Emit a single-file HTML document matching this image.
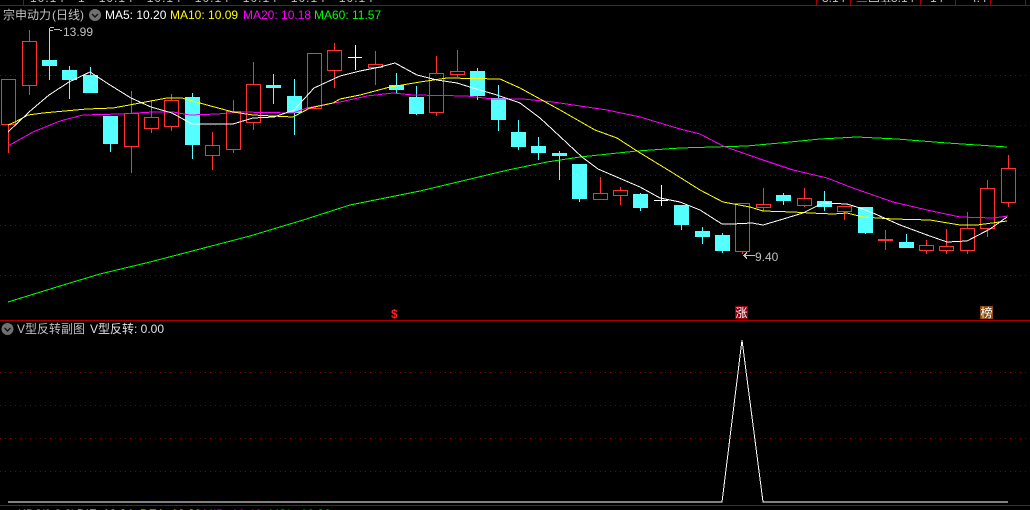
<!DOCTYPE html>
<html>
<head>
<meta charset="utf-8">
<style>
html,body{margin:0;padding:0;background:#000;width:1030px;height:510px;overflow:hidden}
svg{display:block;position:absolute;left:0;top:0}
text{font-family:"Liberation Sans","Noto Sans CJK SC",sans-serif;font-size:12px}
</style>
</head>
<body>
<svg width="1030" height="510" viewBox="0 0 1030 510" xmlns="http://www.w3.org/2000/svg">
<g shape-rendering="crispEdges" fill="none">
<!-- grid -->
<g stroke="#800000" stroke-width="1" stroke-dasharray="1 4">
<path d="M0 75.5H1030M0 125.5H1030M0 175.5H1030M0 225.5H1030M0 275.5H1030"/>
<path d="M0 372.5H1030M0 405.5H1030M0 438.5H1030M0 471.5H1030"/>
</g>
<!-- frame -->
<path stroke="#a80000" d="M0 5.5H1030M0 320.5H1030M0 505.5H1030M23.5 0V5M816.5 0V5M850.5 0V5M885.5 0V5M920.5 0V5M955.5 0V5M990.5 0V5M1025.5 0V5"/>
<!-- red candles -->
<path stroke="#ff3232" d="
M1.5 79.5h14v45h-14zM8.5 125V153
M22.5 41.5h14v44h-14zM29.5 30V41M29.5 86V95
M124.5 113.5h14v33h-14zM131.5 91V113M131.5 147V173
M144.5 117.5h14v11h-14zM151.5 100V117M151.5 129V133
M164.5 100.5h14v26h-14zM171.5 94V100M171.5 127V131
M205.5 145.5h14v10h-14zM212.5 132V145M212.5 156V170
M226.5 111.5h14v38h-14zM233.5 100V111M233.5 150V153
M246.5 84.5h14v38h-14zM253.5 62V84M253.5 123V130
M307.5 53.5h14v55h-14z
M327.5 50.5h14v20h-14zM334.5 43V50M334.5 71V88
M368.5 64.5h14v3h-14zM375.5 51V64M375.5 68V85
M429.5 73.5h14v39h-14zM436.5 56V73M436.5 113V116
M450.5 71.5h14v3h-14zM457.5 50V71M457.5 75V77
M593.5 193.5h14v6h-14zM600.5 177V193
M613.5 190.5h14v5h-14zM620.5 187V190M620.5 196V205
M735.5 203.5h14v48h-14zM742.5 252V254
M756.5 204.5h14v3h-14zM763.5 188V204M763.5 208V211
M797.5 198.5h14v7h-14zM804.5 188V198M804.5 206V207
M837.5 206.5h14v5h-14zM844.5 212V220
M878 239.5h15M878 240.5h15M885.5 230V250
M919.5 245.5h14v5h-14zM926.5 240V245M926.5 251V254
M939.5 246.5h14v4h-14zM946.5 229V246M946.5 251V254
M960.5 228.5h14v22h-14zM967.5 212V228M967.5 251V254
M980.5 188.5h14v40h-14zM987.5 180V188M987.5 229V237
M1001.5 168.5h14v34h-14zM1008.5 155V168M1008.5 203V207
"/>
<!-- cyan candle wicks -->
<path stroke="#54ffff" d="
M49.5 28V80M69.5 66V99M90.5 67V93M110.5 116V152M192.5 93V159M273.5 74V104M294.5 79V135
M396.5 73V94M416.5 86V115M477.5 68V100M498.5 85V131M518.5 120V150M538.5 137V160M559.5 151V180
M579.5 164V202M640.5 193V211M681.5 205V230M702.5 227V244M722.5 233V253M783.5 193V205M824.5 191V211
M865.5 207V234M906.5 234V248"/>
<!-- cyan bodies -->
<g fill="#54ffff">
<rect x="42" y="60" width="15" height="6"/>
<rect x="62" y="70" width="15" height="10"/>
<rect x="83" y="75" width="15" height="18"/>
<rect x="103" y="116" width="15" height="28"/>
<rect x="185" y="97" width="15" height="48"/>
<rect x="266" y="85" width="15" height="3"/>
<rect x="287" y="96" width="15" height="17"/>
<rect x="389" y="85" width="15" height="5"/>
<rect x="409" y="97" width="15" height="17"/>
<rect x="470" y="71" width="15" height="25"/>
<rect x="491" y="98" width="15" height="22"/>
<rect x="511" y="132" width="15" height="15"/>
<rect x="531" y="146" width="15" height="7"/>
<rect x="552" y="153" width="15" height="3"/>
<rect x="572" y="164" width="15" height="35"/>
<rect x="633" y="194" width="15" height="14"/>
<rect x="674" y="205" width="15" height="20"/>
<rect x="695" y="231" width="15" height="6"/>
<rect x="715" y="235" width="15" height="16"/>
<rect x="776" y="195" width="15" height="6"/>
<rect x="817" y="201" width="15" height="6"/>
<rect x="858" y="207" width="15" height="26"/>
<rect x="899" y="242" width="15" height="6"/>
</g>
<!-- white dojis -->
<path stroke="#fff" d="M348 57.5H362M355.5 45V70M654 200.5H668M661.5 185V206"/>
<!-- MA60 -->
<polyline stroke="#00ff00" points="8,302 60,286 100,274 150,262 250,236 300,221 350,205 420,191 508,170 547,162 580,157 637,151 680,148 713,147 747,146 780,143 820,139 857,137 897,139 947,143 1007,147"/>
<!-- MA20 -->
<polyline stroke="#ff00ff" points="8,146 33,132 60,121 83,115 120,114 153,112 173,112 190,115 217,114 240,112 293,113 307,108 333,103 340,102 367,96 393,93 413,95 467,96 493,99 523,99 553,102 607,110 640,117 680,129 700,134 723,146 760,159 793,170 827,178 853,188 893,202 927,210 960,217 993,218 1008,216"/>
<!-- MA10 -->
<polyline stroke="#ffff00" points="8,125 15,122 28,115 43,113 87,109 113,108 140,103 167,98 182,98 207,105 233,112 253,115 293,117 310,108 333,103 340,99 360,95 390,87 420,82 447,78 500,79 520,88 540,99 560,110 595,130 617,138 637,151 673,173 700,190 723,202 750,207 763,211 793,212 810,213 833,214 847,213 863,217 893,219 930,220 960,225 977,225 1007,221"/>
<!-- MA5 -->
<polyline stroke="#ffffff" points="8,132 29,112 49,95 69,82 90,72 110,85 131,98 151,107 172,113 192,124 212,124 233,124 253,118 274,117 294,110 314,88 340,76 360,71 380,67 395,63 417,75 437,80 457,83 473,88 497,95 520,103 540,118 553,130 582,157 598,169 640,187 660,198 680,202 700,210 722,224 732,224 752,223 763,225 780,220 803,213 823,203 847,204 860,208 873,213 900,225 927,235 947,242 967,241 990,229 1007,217"/>
<!-- sub chart line -->
<polyline stroke="#ffffff" points="8,502 722,502 742,340 763,502 1008,502"/>
<!-- annotation arrows -->
<path stroke="#c0c0c0" d="M50 27.5H54M50 30.5H53M54 29.5H60M60 30.5H62M743 255.5H755M744 254.5H746M744 256.5H746M745 253.5H747M745 257.5H747M746 252.5H747M746 258.5H747"/>
<!-- badges -->
<rect x="735" y="306" width="13" height="13" fill="#8c0010"/>
<rect x="980" y="306" width="13" height="13" fill="#8c4a10"/>
</g>
<!-- clipped top strip text -->
<svg x="0" y="0" width="1030" height="2" overflow="hidden">
<text x="30" y="2" fill="#c0c0c0" style="letter-spacing:1px">10.14 &#160; 1 &#160; 10.14 &#160; 10.14 &#160; 10.14 &#160; 10.14 &#160; 10.14 &#160; 10.14</text>
<text x="822" y="2" fill="#c0c0c0">3.14</text>
<text x="856" y="2" fill="#c0c0c0">三四五</text>
<text x="891" y="2" fill="#c0c0c0">3.14</text>
<text x="930" y="2" fill="#c0c0c0">14</text>
<text x="970" y="2" fill="#c0c0c0">4.4</text>
</svg>
<!-- clipped bottom strip text -->
<svg x="0" y="509" width="1030" height="1" overflow="hidden">
<text x="18" y="9" fill="#c0c0c0">KDJ(9,3,3)</text>
<text x="77" y="9" fill="#ffffff">DIF: 10.24</text>
<text x="140" y="9" fill="#ffff00">DEA: 10.80</text>
<text x="203" y="9" fill="#ff00ff">MID: 10.42</text>
<text x="270" y="9" fill="#00ff00">VOL: 10.36</text>
</svg>
<!-- legend -->
<text x="3" y="19" fill="#c0c0c0">宗申动力</text>
<text x="52" y="19" fill="#c0c0c0">(日线)</text>
<circle cx="95" cy="15" r="6" fill="#707070"/>
<path d="M92 14l3 3 3-3" fill="none" stroke="#111" stroke-width="1.4"/>
<text x="105" y="19" fill="#ffffff">MA5: 10.20</text>
<text x="170" y="19" fill="#ffff00">MA10: 10.09</text>
<text x="243" y="19" fill="#ff00ff">MA20: 10.18</text>
<text x="314" y="19" fill="#00ff00">MA60: 11.57</text>
<!-- annotations -->
<text x="63" y="36" fill="#c0c0c0">13.99</text>
<text x="755" y="261" fill="#c0c0c0">9.40</text>
<!-- badges text -->
<text x="391" y="318" fill="#ff2020" font-weight="bold">$</text>
<text x="735.5" y="317" fill="#ffffff" style="font-size:12px">涨</text>
<text x="980.5" y="317" fill="#ffffff" style="font-size:12px">榜</text>
<!-- sub legend -->
<circle cx="7.5" cy="329" r="6" fill="#707070"/>
<path d="M4.5 328l3 3 3-3" fill="none" stroke="#111" stroke-width="1.4"/>
<text x="17" y="333" fill="#c0c0c0">V型反转副图</text>
<text x="90" y="333" fill="#e0e0e0">V型反转: 0.00</text>
</svg>
</body>
</html>
